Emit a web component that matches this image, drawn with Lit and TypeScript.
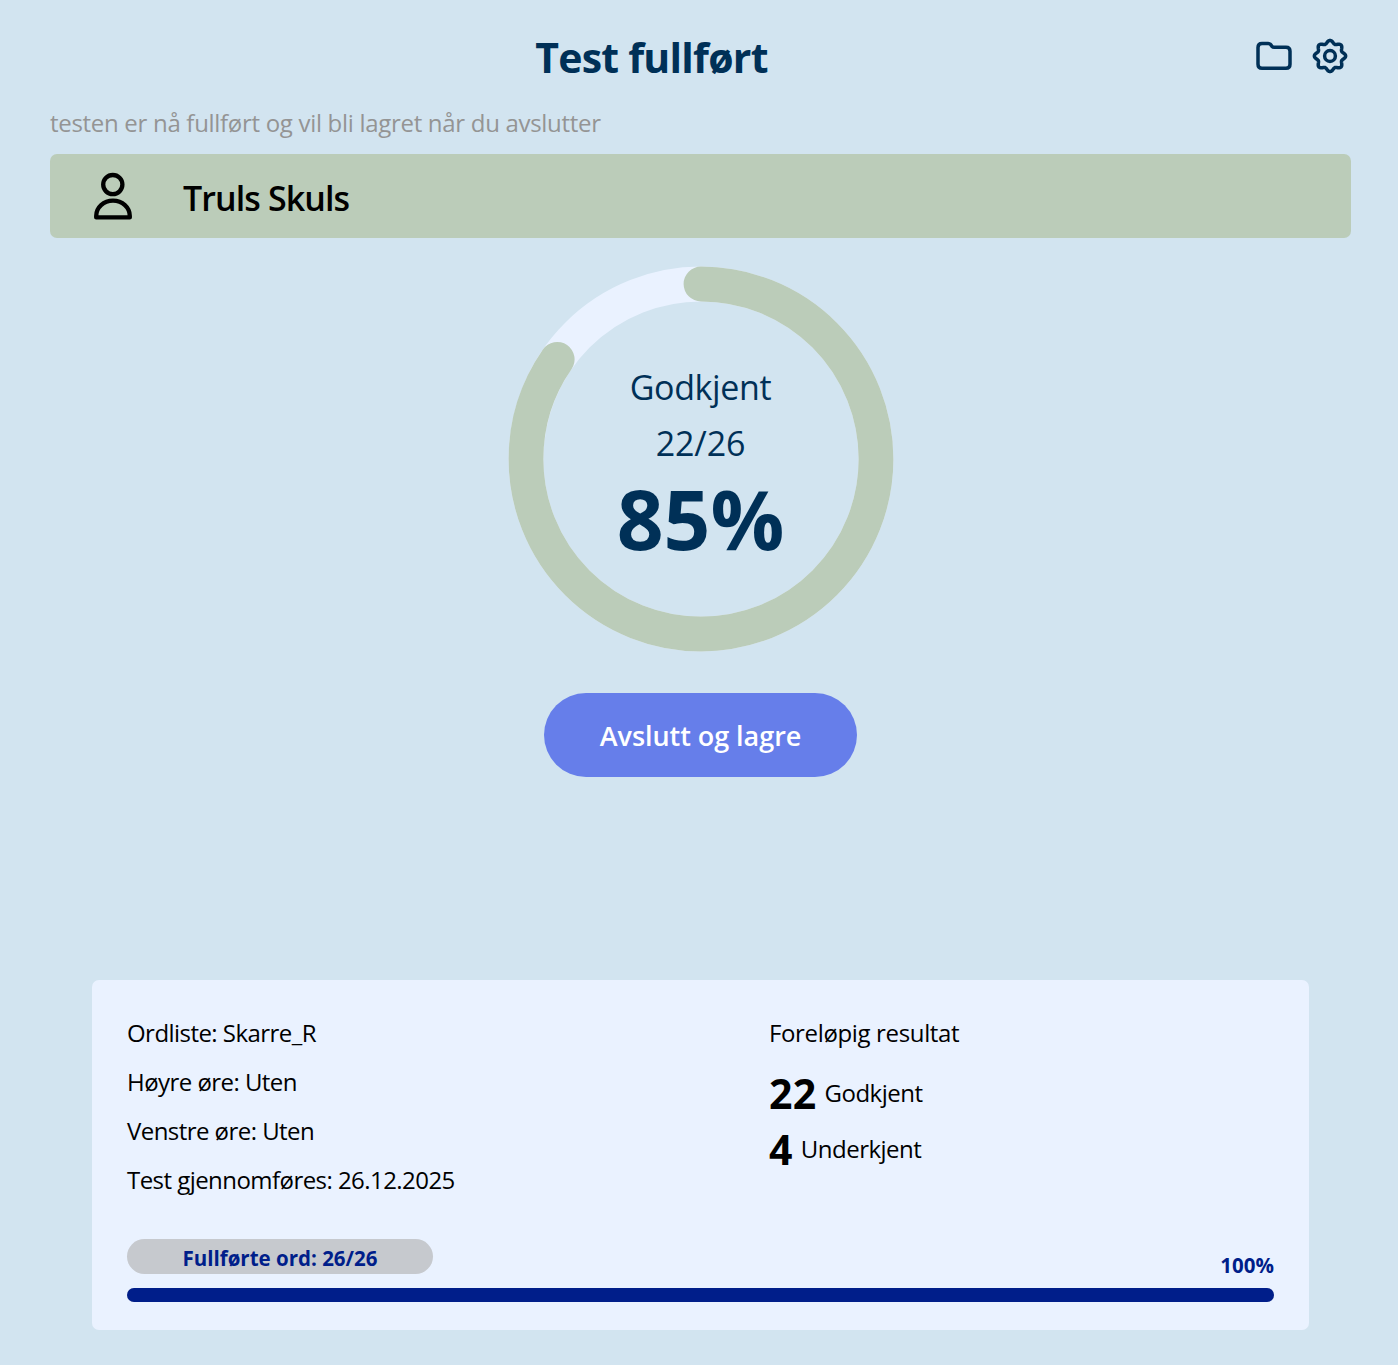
import { LitElement, html, css } from 'lit'
import { customElement, property } from 'lit/decorators.js'

// Closed eight-lobed outline of the settings gear
const gearOutline = (cx: number, cy: number, mid: number, amp: number) => {
	const steps = 96
	const points: string[] = []
	for (let i = 0; i < steps; i++) {
		const a = (i / steps) * Math.PI * 2
		const r = mid + amp * Math.cos(a * 8)
		points.push(`${(cx + r * Math.sin(a)).toFixed(2)} ${(cy - r * Math.cos(a)).toFixed(2)}`)
	}
	return `M${points.join('L')}Z`
}

/**
 * Ring showing the share of approved words.
 *
 * @element result-ring
 * @attr {number} passed - Approved words
 * @attr {number} total - Words in the test
 */
@customElement('result-ring')
class ResultRing extends LitElement {
	@property({ type: Number }) passed = 0
	@property({ type: Number }) total = 1

	static styles = css`
		:host {
			display: grid;
			width: 385px;
			height: 385px;
			color: #003057;
		}

		svg,
		.content {
			grid-area: 1 / 1;
		}

		svg {
			overflow: visible;
		}

		circle {
			fill: none;
			stroke-width: 34.8;
		}

		.track {
			stroke: #eaf2ff;
		}

		.value {
			stroke: #bbccb9;
			stroke-linecap: round;
		}

		.content {
			display: flex;
			flex-direction: column;
			align-items: center;
			padding-top: 93px;
			font-size: 34px;
			line-height: 56px;
		}

		.label {
			letter-spacing: -0.35px;
		}

		.count {
			letter-spacing: -0.1px;
		}

		.percent {
			font-size: 82px;
			font-weight: 700;
			line-height: 94px;
		}
	`

	render() {
		const share = this.passed / this.total
		const length = 2 * Math.PI * 175
		return html`
			<svg viewBox="0 0 385 385" width="385" height="385">
				<circle class="track" cx="193" cy="193" r="175" />
				<circle
					class="value"
					cx="193"
					cy="193"
					r="175"
					transform="rotate(-90 193 193)"
					stroke-dasharray="${length * share} ${length}"
				/>
			</svg>
			<div class="content">
				<span class="label">Godkjent</span>
				<span class="count">${this.passed}/${this.total}</span>
				<span class="percent">${Math.round(share * 100)}%</span>
			</div>
		`
	}
}

@customElement('app-root')
class AppRoot extends LitElement {
	@property() name = 'Truls Skuls'
	@property({ type: Number }) passed = 22
	@property({ type: Number }) failed = 4
	@property({ type: Number }) total = 26

	info = ['Ordliste: Skarre_R', 'Høyre øre: Uten', 'Venstre øre: Uten', 'Test gjennomføres: 26.12.2025']

	static styles = css`
		:host {
			display: flex;
			flex-direction: column;
			box-sizing: border-box;
			height: 1365px;
			padding: 35px 47px 35px 50px;
			background: #d2e4f0;
			color: #000;
			font-family: 'Open Sans', 'Noto Sans', sans-serif;
			font-size: 24px;
		}

		h1,
		p {
			margin: 0;
		}

		header {
			display: flex;
			height: 42px;
		}

		h1 {
			flex: 1;
			text-align: center;
			font-size: 41px;
			font-weight: 700;
			line-height: 44px;
			letter-spacing: -0.75px;
			color: #003057;
		}

		.icon {
			width: 42px;
			height: 42px;
			fill: none;
			stroke: #003057;
			stroke-width: 3.5;
			stroke-linejoin: round;
		}

		.icon + .icon {
			margin-left: 14px;
		}

		.subtitle {
			margin-top: 28px;
			line-height: 36px;
			letter-spacing: -0.3px;
			color: #949494;
		}

		.person {
			display: flex;
			align-items: center;
			gap: 49px;
			height: 84px;
			margin-top: 13px;
			padding-left: 42px;
			box-sizing: border-box;
			border-radius: 7px;
			background: #bbccb9;
			font-size: 34px;
			font-weight: 600;
		}

		.person svg {
			width: 42px;
			height: 50px;
			fill: none;
			stroke: #000;
			stroke-width: 4.3;
			stroke-linejoin: round;
		}

		.name {
			line-height: 46px;
			padding-top: 4px;
			letter-spacing: -0.9px;
		}

		result-ring {
			align-self: center;
			margin-top: 28px;
		}

		button {
			align-self: center;
			width: 313px;
			height: 84px;
			margin-top: 42px;
			padding: 0;
			border: 0;
			border-radius: 42px;
			background: #667eea;
			color: #fff;
			font: 600 27px 'Open Sans', 'Noto Sans', sans-serif;
			letter-spacing: -0.05px;
		}

		.card {
			display: flex;
			flex-direction: column;
			box-sizing: border-box;
			height: 350px;
			margin: auto 42px 0;
			padding: 28px 35px;
			border-radius: 7px;
			background: #eaf2ff;
		}

		.columns {
			display: grid;
			grid-template-columns: 642px 1fr;
			line-height: 49px;
		}

		.info {
			letter-spacing: -0.55px;
		}

		.heading {
			letter-spacing: -0.35px;
		}

		.score {
			display: flex;
			align-items: center;
			gap: 8px;
			line-height: 56px;
			letter-spacing: -0.5px;
		}

		.first {
			margin-top: 8px;
		}

		.score b {
			font-size: 41px;
			letter-spacing: 0.3px;
		}

		.progress {
			display: flex;
			align-items: flex-end;
			justify-content: space-between;
			margin-top: 35px;
			font-size: 20.5px;
			font-weight: 700;
			color: #001e8a;
		}

		.pill {
			width: 306px;
			height: 35px;
			border-radius: 18px;
			background: #c6c9ce;
			line-height: 39px;
			text-align: center;
		}

		.total {
			line-height: 17px;
		}

		.bar {
			height: 14px;
			margin-top: 14px;
			border-radius: 7px;
			background: #c6c9ce;
		}

		.fill {
			height: 100%;
			border-radius: 7px;
			background: #001e8a;
		}
	`

	render() {
		const done = Math.round(((this.passed + this.failed) / this.total) * 100)
		return html`
			<header>
				<h1>Test fullført</h1>
				<svg class="icon" viewBox="0 0 42 42">
					<path
						d="M9 8.4H15.2Q16.6 8.4 17.5 9.4L19 11.3Q19.8 12.3 21.2 12.3H33Q37 12.3 37 16.3V29.2Q37 33.2 33 33.2H9Q5 33.2 5 29.2V12.4Q5 8.4 9 8.4Z"
					/>
				</svg>
				<svg class="icon" viewBox="0 0 42 42">
					<path d=${gearOutline(21, 21, 14.1, 1.55)} />
					<circle cx="21" cy="21" r="5.4" />
				</svg>
			</header>
			<p class="subtitle">testen er nå fullført og vil bli lagret når du avslutter</p>
			<section class="person">
				<svg viewBox="0 0 42 50">
					<circle cx="20.8" cy="13.6" r="9.6" />
					<path d="M4.2 46.4V45C4.2 36.4 11.6 29.7 21 29.7S37.8 36.4 37.8 45V46.4Z" />
				</svg>
				<span class="name">${this.name}</span>
			</section>
			<result-ring .passed=${this.passed} .total=${this.total}></result-ring>
			<button>Avslutt og lagre</button>
			<section class="card">
				<div class="columns">
					<div class="info">${this.info.map((line) => html`<p>${line}</p>`)}</div>
					<div>
						<p class="heading">Foreløpig resultat</p>
						<p class="score first"><b>${this.passed}</b> <span>Godkjent</span></p>
						<p class="score"><b>${this.failed}</b> <span>Underkjent</span></p>
					</div>
				</div>
				<div class="progress">
					<div class="pill">Fullførte ord: ${this.passed + this.failed}/${this.total}</div>
					<div class="total">${done}%</div>
				</div>
				<div class="bar"><div class="fill" style="width: ${done}%"></div></div>
			</section>
		`
	}
}
